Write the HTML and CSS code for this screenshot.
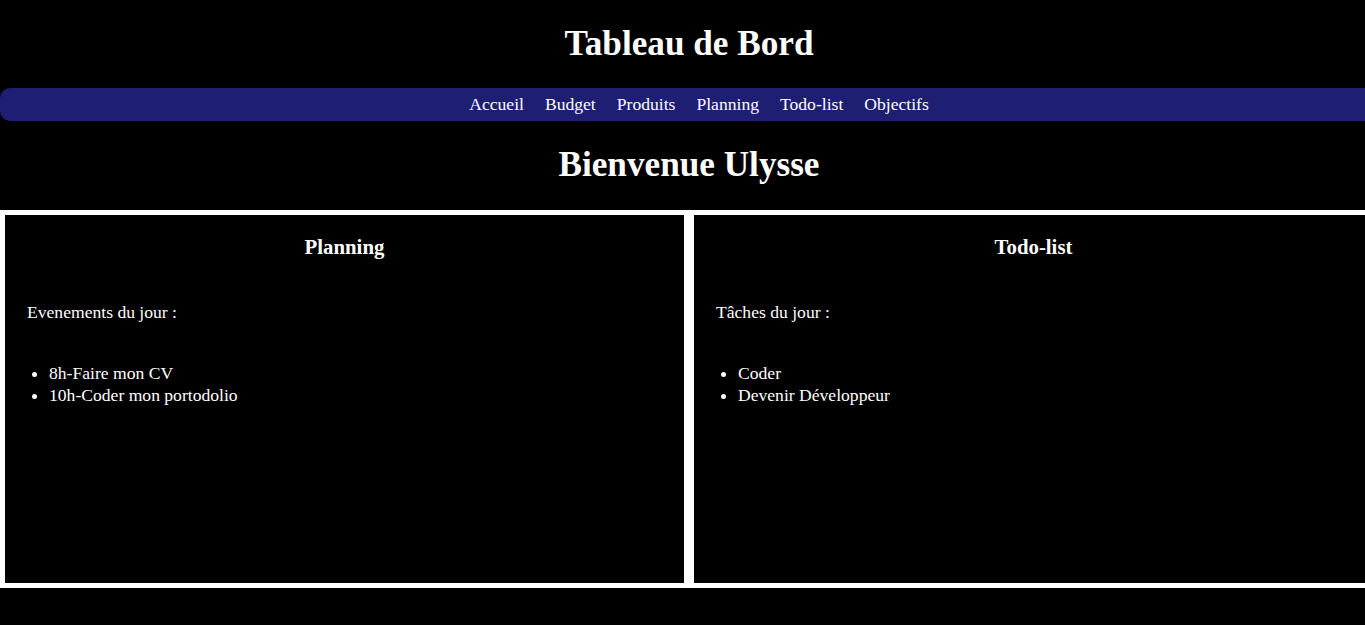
FILE: index.html
```html
<!DOCTYPE html>
<html lang="fr">
<head>
<meta charset="utf-8">
<title>Tableau de Bord</title>
<link rel="stylesheet" href="styles.css">
</head>
<body>
<div class="page">
  <header class="header">
    <h1 class="title">Tableau de Bord</h1>
    <nav class="nav">
      <a href="#">Accueil</a>
      <a href="#">Budget</a>
      <a href="#">Produits</a>
      <a href="#">Planning</a>
      <a href="#">Todo-list</a>
      <a href="#">Objectifs</a>
    </nav>
  </header>
  <h1 class="welcome">Bienvenue Ulysse</h1>
  <main class="cards">
    <section class="card">
      <h3 class="card-title">Planning</h3>
      <p class="card-text">Evenements du jour :</p>
      <ul class="card-list">
        <li>8h-Faire mon CV</li>
        <li>10h-Coder mon portodolio</li>
      </ul>
    </section>
    <section class="card">
      <h3 class="card-title">Todo-list</h3>
      <p class="card-text">Tâches du jour :</p>
      <ul class="card-list">
        <li>Coder</li>
        <li>Devenir Développeur</li>
      </ul>
    </section>
  </main>
</div>
</body>
</html>
```

FILE: styles.css
```css
html, body {
  margin: 0;
  padding: 0;
  background: #000;
  color: #fff;
  font-family: "Liberation Serif", "Times New Roman", serif;
  overflow-x: hidden;
}

.page {
  width: 1378px;
}

.title {
  margin: 0;
  padding: 24px 0 23.5px;
  font-size: 35.2px;
  text-align: center;
}

.nav {
  display: flex;
  justify-content: center;
  gap: 21px;
  background: #1e1e73;
  border-radius: 10px;
  padding: 6.5px 0 6px 20px;
  font-size: 17.6px;
}

.nav a {
  color: #fff;
  text-decoration: none;
}

.welcome {
  margin: 0;
  padding: 24px 0 25px;
  font-size: 35.2px;
  text-align: center;
}

.cards {
  display: flex;
}

.card {
  width: 689px;
  height: 378px;
  box-sizing: border-box;
  border: 5px solid #fff;
  padding: 0 22px;
}

.card-title {
  margin: 20px 0 0;
  font-size: 20.8px;
  text-align: center;
}

.card-text {
  margin: 43px 0 0;
  font-size: 17.6px;
}

.card-list {
  margin: 39px 0 0;
  padding-left: 22px;
  font-size: 17.6px;
  line-height: 22px;
}
```
